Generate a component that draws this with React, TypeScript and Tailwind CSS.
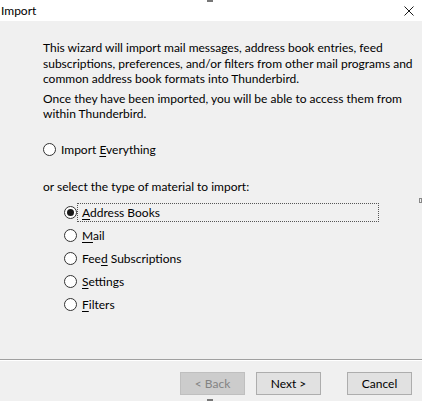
import React from "react";

function Radio({ checked }: { checked?: boolean }) {
  return (
    <span className="flex h-[13px] w-[13px] shrink-0 items-center justify-center rounded-full border border-[#333333] bg-white">
      {checked ? <span className="block h-[7px] w-[7px] rounded-full bg-[#1a1a1a]" /> : null}
    </span>
  );
}

function Option({
  children,
  checked,
  focused,
}: {
  children: React.ReactNode;
  checked?: boolean;
  focused?: boolean;
}) {
  return (
    <div className="flex h-[23px] items-center">
      <Radio checked={checked} />
      <span
        className={
          focused
            ? "block h-[19px] w-[302px] whitespace-nowrap border border-dotted border-[#555555] pl-[4px] leading-[17px]"
            : "block h-[19px] whitespace-nowrap border border-transparent pl-[4px] leading-[17px]"
        }
      >
        {children}
      </span>
    </div>
  );
}

export default function App() {
  return (
    <div
      className="relative flex h-[401px] w-[422px] flex-col overflow-hidden bg-[#f0f0f0] text-[12px] text-black"
      style={{ fontFamily: 'Lato, "Segoe UI", sans-serif' }}
    >
      <div className="flex h-[21px] shrink-0 items-center justify-between bg-white">
        <span className="pl-[1px] leading-[15px]">Import</span>
        <svg width="10" height="10" viewBox="0 0 10 10" className="mr-[8px]">
          <path d="M0.5 0.5 L9.5 9.5 M9.5 0.5 L0.5 9.5" stroke="#1a1a1a" strokeWidth="1" fill="none" />
        </svg>
      </div>

      <div className="flex-1 pl-[43px] pt-[19px]">
        <p className="whitespace-nowrap leading-[15.5px]">
          This wizard will import mail messages, address book entries, feed
          <br />
          subscriptions, preferences, and/or filters from other mail programs and
          <br />
          common address book formats into Thunderbird.
        </p>
        <p className="mt-[4px] whitespace-nowrap leading-[15.5px]">
          Once they have been imported, you will be able to access them from
          <br />
          within Thunderbird.
        </p>

        <div className="mt-[16px]">
          <Option>
            Import <span className="underline underline-offset-2">E</span>verything
          </Option>
        </div>

        <div className="mt-[15px] flex h-[23px] items-center">or select the type of material to import:</div>

        <div className="ml-[21px] mt-[2px] flex flex-col">
          <Option checked focused>
            <span className="underline underline-offset-2">A</span>ddress Books
          </Option>
          <Option>
            <span className="underline underline-offset-2">M</span>ail
          </Option>
          <Option>
            Fee<span className="underline underline-offset-2">d</span> Subscriptions
          </Option>
          <Option>
            <span className="underline underline-offset-2">S</span>ettings
          </Option>
          <Option>
            <span className="underline underline-offset-2">F</span>ilters
          </Option>
        </div>
      </div>

      <div className="flex h-[42px] shrink-0 flex-col border-t border-[#a0a0a0]">
        <div className="h-px bg-white" />
        <div className="flex justify-end pr-[10px] pt-[11px]">
          <button className="flex h-[23px] w-[65px] items-center justify-center border border-[#bfbfbf] bg-[#cccccc] text-[#838383]">
            &lt; Back
          </button>
          <button className="ml-[11px] flex h-[23px] w-[65px] items-center justify-center border border-[#adadad] bg-[#e1e1e1]">
            Next &gt;
          </button>
          <button className="ml-[26px] flex h-[23px] w-[65px] items-center justify-center border border-[#adadad] bg-[#e1e1e1]">
            Cancel
          </button>
        </div>
      </div>

      <span className="absolute left-[207px] top-0 h-[2px] w-[6px] bg-[#777777]" />
      <span className="absolute left-[207px] bottom-0 h-[2px] w-[6px] bg-[#777777]" />
      <span className="absolute left-[419px] top-[198px] h-[5px] w-[3px] border border-[#888888]" />
    </div>
  );
}
